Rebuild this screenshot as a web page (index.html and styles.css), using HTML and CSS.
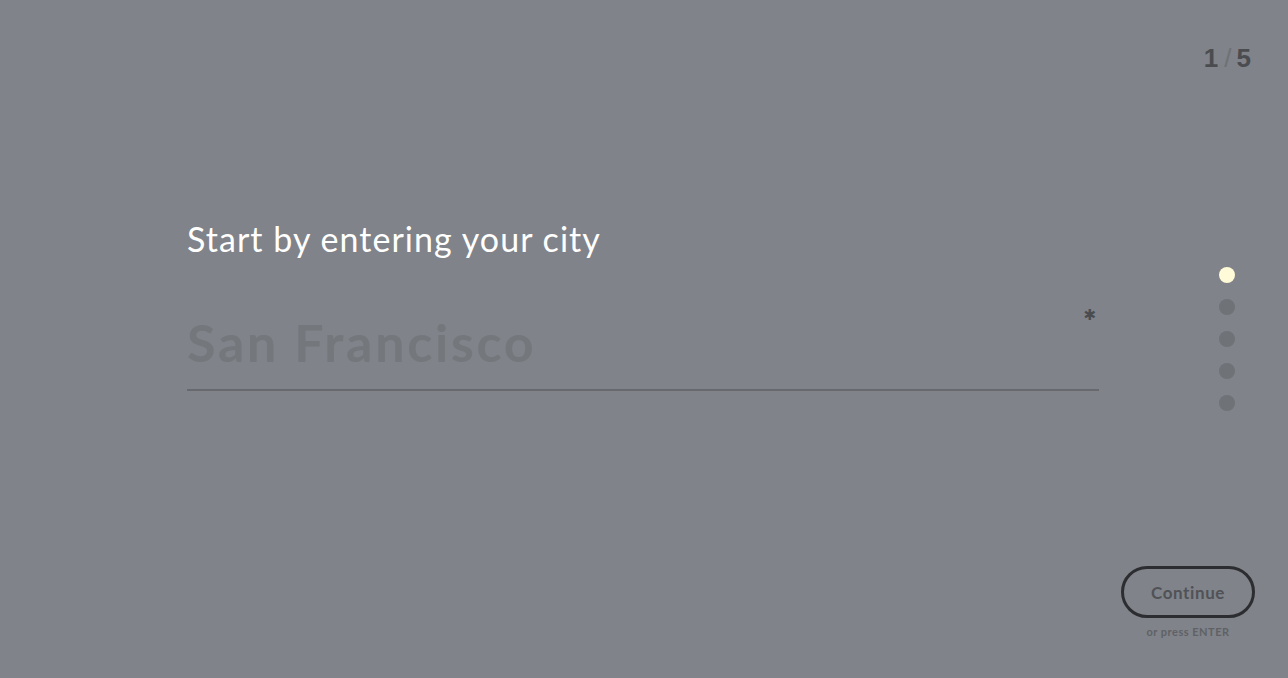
FILE: index.html
```html
<!DOCTYPE html>
<html lang="en">
<head>
<meta charset="utf-8">
<title>Start by entering your city</title>
<link rel="stylesheet" href="styles.css">
</head>
<body>
<div class="page">
  <header class="topbar">
    <div class="counter"><span class="cur">1</span><span class="sep">/</span><span class="total">5</span></div>
  </header>
  <div class="stage">
    <main class="question">
      <h1 class="title">Start by entering your city</h1>
      <div class="field">
        <input class="city" type="text" placeholder="San Francisco">
        <span class="req">✱</span>
      </div>
    </main>
    <nav class="dots">
      <span class="dot active"></span>
      <span class="dot"></span>
      <span class="dot"></span>
      <span class="dot"></span>
      <span class="dot"></span>
    </nav>
  </div>
  <footer class="actions">
    <button class="continue" type="button">Continue</button>
    <div class="hint">or press ENTER</div>
  </footer>
</div>
</body>
</html>
```
FILE: styles.css
```css
* { box-sizing: border-box; }
html, body { margin: 0; padding: 0; }
body {
  background: #808389;
  font-family: "Lato", "Open Sans", sans-serif;
}
.page {
  height: 100vh;
  display: flex;
  flex-direction: column;
}
.topbar {
  display: flex;
  justify-content: flex-end;
  padding: 43px 37px 0 0;
}
.counter {
  font-family: "Liberation Sans", Arial, sans-serif;
  font-weight: 700;
  font-size: 26px;
  line-height: 30px;
  color: #4a4c50;
}
.counter .sep {
  font-weight: 400;
  color: #6e7175;
  margin: 0 5px 0 6px;
}
.stage {
  display: flex;
  padding-left: 187px;
  margin-top: 146px;
}
.question {
  width: 912px;
}
.title {
  margin: 0;
  font-size: 34px;
  line-height: 1.2;
  font-weight: 400;
  color: #ffffff;
  letter-spacing: 1.05px;
}
.field {
  position: relative;
  margin-top: 52px;
}
.city {
  display: block;
  width: 100%;
  border: 0;
  border-bottom: 2px solid #67696e;
  background: transparent;
  font-family: "Lato", sans-serif;
  font-weight: 700;
  font-size: 52px;
  line-height: 60px;
  height: 79px;
  padding: 0 0 17px 0;
  color: #3a3c40;
  letter-spacing: 2.7px;
  outline: none;
}
.city::placeholder {
  color: #74777c;
  opacity: 1;
}
.req {
  position: absolute;
  right: 3px;
  top: -6px;
  font-family: "DejaVu Sans", sans-serif;
  font-size: 15px;
  color: #4a4c50;
}
.dots {
  display: flex;
  flex-direction: column;
  gap: 16px;
  margin-left: 120px;
  margin-top: 48px;
}
.dot {
  width: 16px;
  height: 16px;
  border-radius: 50%;
  background: #6f7277;
}
.dot.active {
  background: #fffbd8;
}
.actions {
  margin-top: auto;
  align-self: flex-end;
  display: flex;
  flex-direction: column;
  align-items: center;
  padding: 0 33px 39px 0;
}
.continue {
  width: 134px;
  height: 52px;
  border: 3px solid #2b2d31;
  border-radius: 26px;
  background: transparent;
  font-family: "Lato", sans-serif;
  font-weight: 700;
  font-size: 17px;
  color: #505257;
  letter-spacing: 0.6px;
  cursor: pointer;
}
.hint {
  margin-top: 7px;
  font-size: 11px;
  line-height: 14px;
  font-weight: 700;
  color: #5f6166;
  letter-spacing: 0.5px;
}
```
